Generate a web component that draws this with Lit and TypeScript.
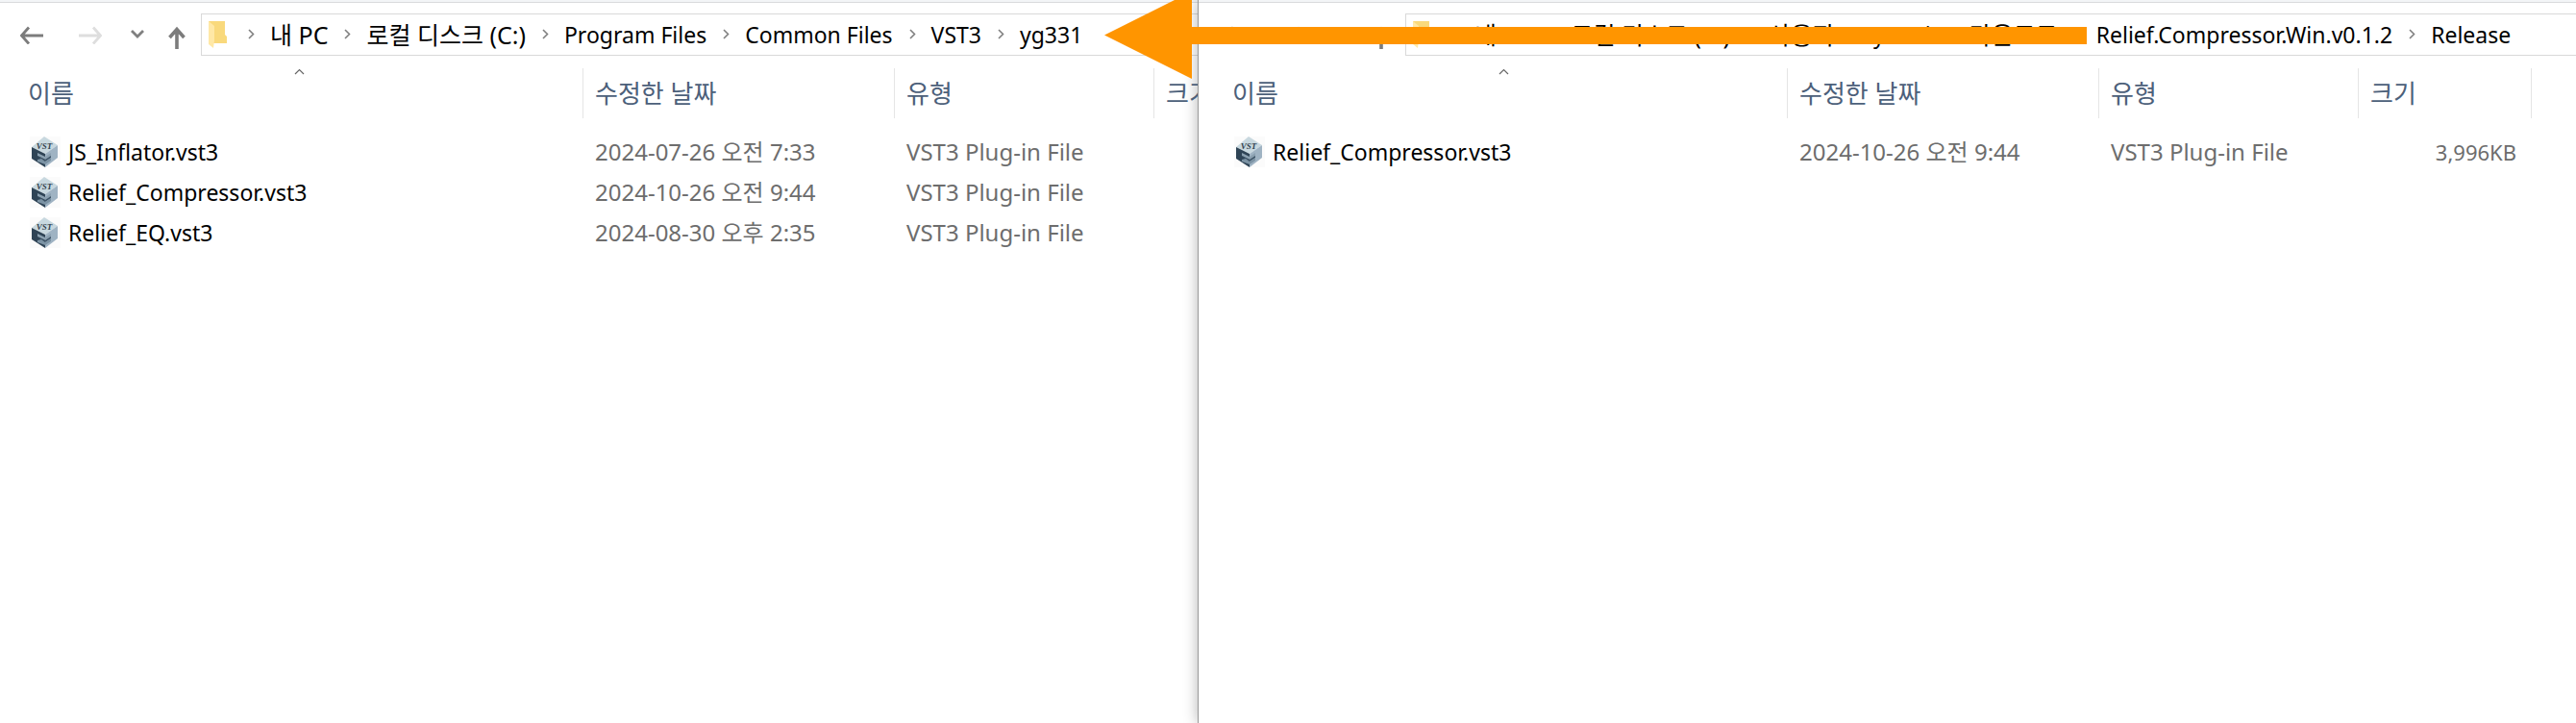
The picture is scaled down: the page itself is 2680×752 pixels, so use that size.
import { LitElement, html, css } from "lit";
import { customElement, property } from "lit/decorators.js";
import { classMap } from "lit/directives/class-map.js";

interface FileRow { name: string; date: string; type: string; size: string }

@customElement("vst-icon")
class VstIcon extends LitElement {
  static styles = css`
    :host { display: block; flex: none; }
    svg { display: block; }
    text { font: italic bold 9px "Liberation Serif", serif; fill: #34434f; }
  `;
  render() {
    return html`<svg width="32" height="32" viewBox="0 0 32 32" aria-hidden="true">
      <rect width="32" height="32" fill="#fbfbfb" />
      <path d="M15 0 L29 9 L16 18 L2 11Z" fill="#c8d8df" />
      <path d="M2 11 L16 18 V32 L2 23Z" fill="#2f4456" />
      <path d="M16 18 L29 9 V22 L16 32Z" fill="#9fb3c3" />
      <path d="M8 17 L16 21 L22 17 V20 L16 24 L8 20Z" fill="#8ba0b0" />
      <path d="M8 20 L16 24 L22 20 V22 L16 26 L12 24Z" fill="#3d5366" />
      <path d="M8 24 L12 23 L16 26 L22 22 V25 L16 29 L8 26Z" fill="#7c93a4" />
      <text x="15" y="13" text-anchor="middle">VST</text>
    </svg>`;
  }
}

@customElement("explorer-pane")
class ExplorerPane extends LitElement {
  @property({ attribute: false }) path: string[] = [];
  @property({ attribute: false }) files: FileRow[] = [];

  static styles = css`
    :host { display: block; min-width: 0; overflow: hidden; background: #fff; }
    .top { height: 2px; background: #f3f5f7; border-bottom: 1px solid #d9dbdd; }
    .body { padding-left: var(--pane-inset, 0); }
    .bar { display: flex; align-items: center; margin-top: 11px; height: 44px; }
    button { border: 0; padding: 0; background: none; font: inherit; color: inherit; display: block; }
    svg { display: block; }
    .nav { display: flex; align-items: center; flex: none; box-sizing: border-box; width: 209px; padding-left: 21px; }
    .back { margin-right: 37px; }
    .forward { margin-right: 30px; }
    .recent { margin-right: 25px; }
    .up { padding-top: 5px; }
    .address { box-sizing: border-box; display: flex; align-items: center; flex: 1; min-width: 1300px; height: 44px; border: 1px solid #d9d9d9; padding-left: 7px; }
    .crumbs { display: flex; align-items: center; list-style: none; margin: 0; padding: 0 0 0 22px; white-space: nowrap; }
    .crumbs li { display: flex; align-items: center; }
    .crumbs svg { margin: 0 16px 0 17px; }
    .crumbs li:first-child svg { margin-left: 0; }
    a { color: #000; text-decoration: none; font-size: 23px; line-height: 32px; }
    a.hangul { font-size: 25px; }
    table { border-collapse: separate; border-spacing: 0; table-layout: fixed; width: 1381px; margin-top: 13px; }
    .c-name { width: 607px; } .c-date { width: 324px; } .c-type { width: 270px; } .c-size { width: 180px; }
    th { position: relative; height: 52px; box-sizing: border-box; padding: 0 0 0 12px; text-align: left; font-size: 26px; font-weight: 400; color: #4c607a; border-right: 1px solid #e5e5e5; line-height: 32px; }
    th:first-child { padding-left: 29px; }
    .sort { position: absolute; left: 306px; top: 0; }
    td { padding: 0 0 0 12px; height: 42px; color: #6d6d6d; line-height: 32px; white-space: nowrap; }
    td:first-child { padding-left: 31px; color: #000; font-size: 23px; }
    td:last-child { text-align: right; padding-right: 16px; font-size: 22px; }
    tbody::before { content: ""; display: block; height: 14px; }
    .file { display: flex; align-items: center; gap: 8px; }
  `;

  private chevron() {
    return html`<svg width="7" height="12" viewBox="0 0 7 12" aria-hidden="true"><path d="M1 1 L5.500 5.500 L1 10" fill="none" stroke="#808080" stroke-width="1.600" /></svg>`;
  }

  render() {
    return html`
      <div class="top"></div>
      <div class="body">
      <div class="bar">
        <div class="nav">
          <button class="back" aria-label="뒤로"><svg width="24" height="20" viewBox="0 0 24 20"><path d="M24 11 H2 M9 2.500 L1.500 11 L9 19.500" fill="none" stroke="#7c7c7c" stroke-width="2.800" /></svg></button>
          <button class="forward" aria-label="앞으로"><svg width="24" height="20" viewBox="0 0 24 20"><path d="M0 11 H22 M15 2.500 L22.500 11 L15 19.500" fill="none" stroke="#dedede" stroke-width="2.800" /></svg></button>
          <button class="recent" aria-label="최근 위치"><svg width="14" height="10" viewBox="0 0 14 10"><path d="M1 1 L7 7 L13 1" fill="none" stroke="#808080" stroke-width="2.800" /></svg></button>
          <button class="up" aria-label="위로"><svg width="18" height="24" viewBox="0 0 18 24"><path d="M9 24 V4 M1.500 12 L9 3.500 L16.500 12" fill="none" stroke="#7c7c7c" stroke-width="3.600" /></svg></button>
        </div>
        <div class="address">
          <svg width="19" height="28" viewBox="0 0 19 28" aria-hidden="true"><path d="M0 0 H17 V14 L19 16 V23 H5Z" fill="#f9d97c" /><path d="M0 0 L6 5 V20 L5 28 L0 24Z" fill="#ffe8a6" /></svg>
          <ol class="crumbs">${this.path.map((p) => html`<li>${this.chevron()}<a class=${classMap({ hangul: /[가-힣]/.test(p) })} href="#">${p}</a></li>`)}</ol>
        </div>
      </div>
      <table>
        <colgroup><col class="c-name" /><col class="c-date" /><col class="c-type" /><col class="c-size" /></colgroup>
        <thead><tr>
          <th scope="col">이름<svg class="sort" width="11" height="7" viewBox="0 0 11 7" aria-hidden="true"><path d="M1 6 L5.500 1.500 L10 6" fill="none" stroke="#666" stroke-width="1.200" /></svg></th>
          <th scope="col">수정한 날짜</th><th scope="col">유형</th><th scope="col">크기</th>
        </tr></thead>
        <tbody>${this.files.map((f) => html`<tr><td><div class="file"><vst-icon></vst-icon>${f.name}</div></td><td>${f.date}</td><td>${f.type}</td><td>${f.size}</td></tr>`)}</tbody>
      </table>
      </div>`;
  }
}

@customElement("app-root")
class AppRoot extends LitElement {
  static styles = css`
    :host { display: block; position: relative; min-height: 100vh; overflow: hidden; background: #fff; font: 24px "Noto Sans", "Noto Sans CJK KR", sans-serif; }
    .panes { display: grid; grid-template-columns: 1246fr 1434fr; min-height: 100vh; }
    .front { --pane-inset: 6px; border-left: 1px solid #999; box-shadow: 0 0 14px rgba(0, 0, 0, 0.3); }
    .arrow { position: absolute; left: 1149px; top: -9px; width: 1022px; height: 91px; }
  `;

  render() {
    return html`
      <main class="panes">
        <explorer-pane
          .path=${["내 PC", "로컬 디스크 (C:)", "Program Files", "Common Files", "VST3", "yg331"]}
          .files=${[
            { name: "JS_Inflator.vst3", date: "2024-07-26 오전 7:33", type: "VST3 Plug-in File", size: "" },
            { name: "Relief_Compressor.vst3", date: "2024-10-26 오전 9:44", type: "VST3 Plug-in File", size: "" },
            { name: "Relief_EQ.vst3", date: "2024-08-30 오후 2:35", type: "VST3 Plug-in File", size: "" },
          ]}></explorer-pane>
        <explorer-pane class="front"
          .path=${["내 PC", "로컬 디스크 (C:)", "사용자", "yooni", "다운로드", "Relief.Compressor.Win.v0.1.2", "Release"]}
          .files=${[{ name: "Relief_Compressor.vst3", date: "2024-10-26 오전 9:44", type: "VST3 Plug-in File", size: "3,996KB" }]}></explorer-pane>
      </main>
      <svg class="arrow" viewBox="0 0 1022 91" aria-hidden="true"><path d="M0 45.500 L91 0 V37 H1022 V55 H91 V91Z" fill="#ff9500" /></svg>`;
  }
}
